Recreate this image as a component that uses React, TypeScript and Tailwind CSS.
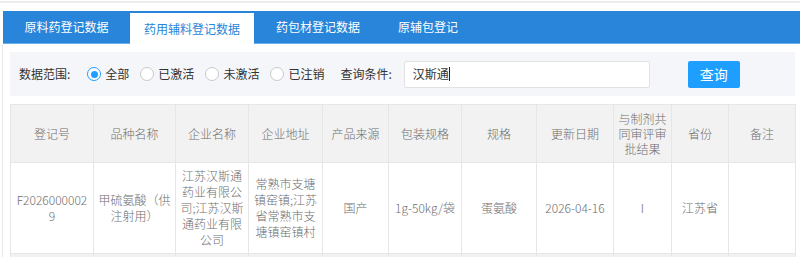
import React from "react";

const font = { fontFamily: '"Noto Sans CJK SC", "Noto Sans", sans-serif' };

function Radio({ checked, label }: { checked?: boolean; label: string }) {
  return (
    <div className="flex items-center mr-[11px]">
      {checked ? (
        <span className="w-[14px] h-[14px] rounded-full border border-[#1e9fff] bg-white flex items-center justify-center">
          <span className="w-[7px] h-[7px] rounded-full bg-[#1e9fff]" />
        </span>
      ) : (
        <span className="w-[14px] h-[14px] rounded-full border border-[#c9c9c9] bg-white" />
      )}
      <span className="ml-[4px] text-[12px] text-[#333] leading-[16px]">{label}</span>
    </div>
  );
}

const cols = [83, 82, 73, 74, 66, 73, 75, 77, 58, 57, 67];
const heads = [
  "登记号",
  "品种名称",
  "企业名称",
  "企业地址",
  "产品来源",
  "包装规格",
  "规格",
  "更新日期",
  "与制剂共同审评审批结果",
  "省份",
  "备注",
];
const row = [
  "F20260000029",
  "甲硫氨酸（供注射用）",
  "江苏汉斯通药业有限公司;江苏汉斯通药业有限公司",
  "常熟市支塘镇窑镇;江苏省常熟市支塘镇窑镇村",
  "国产",
  "1g-50kg/袋",
  "蛋氨酸",
  "2026-04-16",
  "I",
  "江苏省",
  "",
];

export default function App() {
  return (
    <div className="w-[800px] h-[257px] overflow-hidden bg-white" style={font}>
      <div className="h-[1px]" />
      <div className="h-[2px] bg-[#ededed]" />
      <div className="pl-[3px] pt-[8px]">
        <div className="h-[33px] bg-[#2985d9] border-b border-[#6aaee9] flex items-end">
          <div className="w-[127px] h-[32px] flex items-center justify-center text-[12px] text-white">
            原料药登记数据
          </div>
          <div className="relative -mb-px w-[124px] h-[31px] bg-white flex items-center justify-center text-[12px] text-[#2985d9]">
            药用辅料登记数据
          </div>
          <div className="w-[128px] h-[32px] flex items-center justify-center text-[12px] text-white">
            药包材登记数据
          </div>
          <div className="w-[92px] h-[32px] flex items-center justify-center text-[12px] text-white">
            原辅包登记
          </div>
        </div>
      </div>
      <div className="ml-[2px] border-l border-[#e8e8e8] pl-[7px] pt-[8px] h-[220px]">
        <div className="w-[785px] h-[44px] bg-[#f5f6fa] flex items-center pl-[9px]">
          <span className="text-[12px] text-[#333] mr-[17px]">数据范围:</span>
          <Radio checked label="全部" />
          <Radio label="已激活" />
          <Radio label="未激活" />
          <Radio label="已注销" />
          <span className="text-[12px] text-[#333] ml-[5px]">查询条件:</span>
          <div className="ml-[12px] w-[246px] h-[27px] border border-[#e2e2e2] rounded-[2px] bg-white flex items-center pl-[8px]">
            <span className="text-[12px] text-[#333]">汉斯通</span>
            <span className="w-px h-[14px] bg-[#222]" />
          </div>
          <button className="ml-[38px] w-[52px] h-[27px] rounded-[2px] bg-[#1e9fff] text-white text-[14px] flex items-center justify-center">
            查询
          </button>
        </div>
        <table className="mt-[8px] w-[785px] table-fixed border-collapse text-[12px] text-[#6e6e6e] font-light">
          <colgroup>
            {cols.map((w, i) => (
              <col key={i} style={{ width: w }} />
            ))}
          </colgroup>
          <thead>
            <tr className="h-[58px] bg-[#f2f2f2]">
              {heads.map((h, i) => (
                <th
                  key={i}
                  className="border border-[#e6e6e6] px-[4px] font-light leading-[15px] text-center align-middle break-all"
                >
                  {h}
                </th>
              ))}
            </tr>
          </thead>
          <tbody>
            <tr className="h-[91px] bg-white">
              {row.map((c, i) => (
                <td
                  key={i}
                  className="border border-[#e6e6e6] px-[4px] leading-[16px] text-center align-middle break-all"
                >
                  {c}
                </td>
              ))}
            </tr>
            <tr className="h-[40px] bg-[#f2f2f2]">
              {row.map((_, i) => (
                <td key={i} className="border border-[#e6e6e6]" />
              ))}
            </tr>
          </tbody>
        </table>
      </div>
    </div>
  );
}
